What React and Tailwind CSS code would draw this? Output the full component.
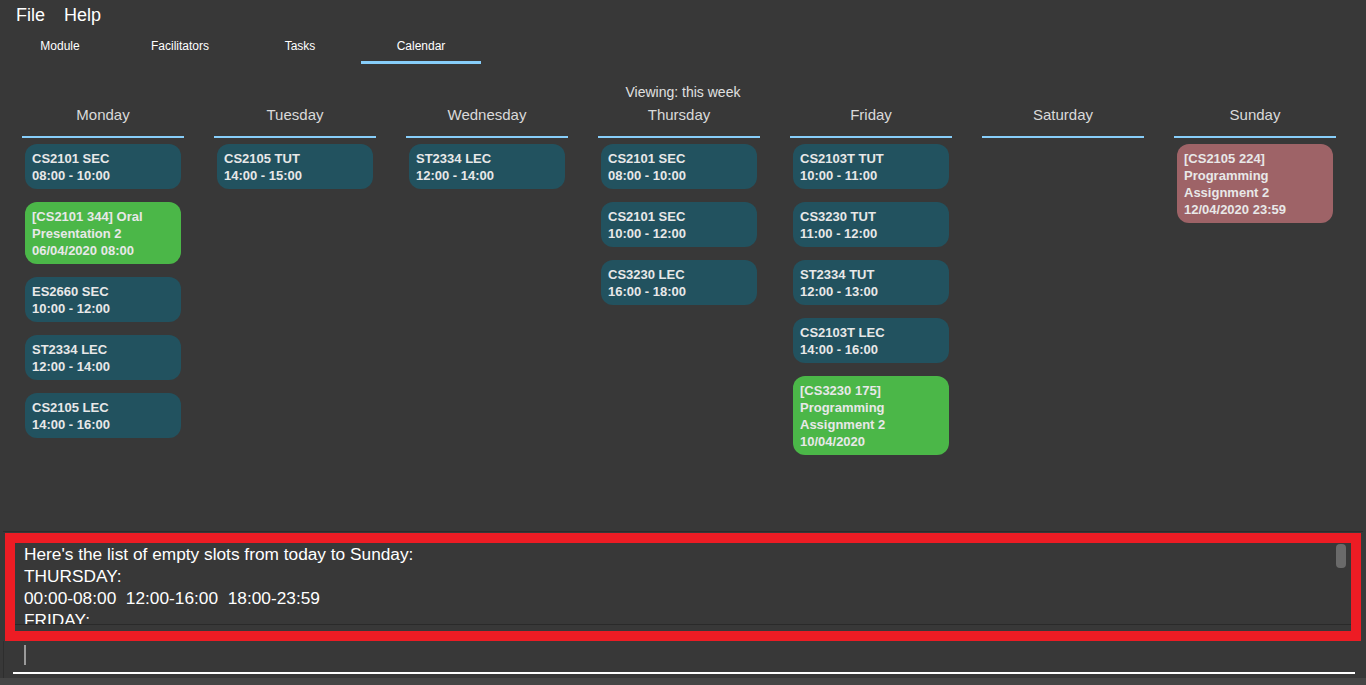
const days = [
  {
    name: "Monday",
    items: [
      { kind: "lesson", lines: ["CS2101 SEC", "08:00 - 10:00"] },
      { kind: "task", lines: ["[CS2101 344] Oral", "Presentation 2", "06/04/2020 08:00"] },
      { kind: "lesson", lines: ["ES2660 SEC", "10:00 - 12:00"] },
      { kind: "lesson", lines: ["ST2334 LEC", "12:00 - 14:00"] },
      { kind: "lesson", lines: ["CS2105 LEC", "14:00 - 16:00"] },
    ],
  },
  { name: "Tuesday", items: [{ kind: "lesson", lines: ["CS2105 TUT", "14:00 - 15:00"] }] },
  { name: "Wednesday", items: [{ kind: "lesson", lines: ["ST2334 LEC", "12:00 - 14:00"] }] },
  {
    name: "Thursday",
    items: [
      { kind: "lesson", lines: ["CS2101 SEC", "08:00 - 10:00"] },
      { kind: "lesson", lines: ["CS2101 SEC", "10:00 - 12:00"] },
      { kind: "lesson", lines: ["CS3230 LEC", "16:00 - 18:00"] },
    ],
  },
  {
    name: "Friday",
    items: [
      { kind: "lesson", lines: ["CS2103T TUT", "10:00 - 11:00"] },
      { kind: "lesson", lines: ["CS3230 TUT", "11:00 - 12:00"] },
      { kind: "lesson", lines: ["ST2334 TUT", "12:00 - 13:00"] },
      { kind: "lesson", lines: ["CS2103T LEC", "14:00 - 16:00"] },
      { kind: "task", lines: ["[CS3230 175]", "Programming", "Assignment 2", "10/04/2020"] },
    ],
  },
  { name: "Saturday", items: [] },
  {
    name: "Sunday",
    items: [{ kind: "overdue", lines: ["[CS2105 224]", "Programming", "Assignment 2", "12/04/2020 23:59"] }],
  },
];

const cardColor = {
  lesson: "bg-[#22525f]",
  task: "bg-[#4bb748]",
  overdue: "bg-[#9e6367]",
};

const Card = ({ item }) => (
  <div className={`${cardColor[item.kind]} rounded-[12px] px-[7px] py-[5.5px] text-[13px] font-bold leading-[17px] text-[#e8e8e8]`}>
    {item.lines.map((l, i) => (
      <div key={i}>{l}</div>
    ))}
  </div>
);

const DayColumn = ({ day }) => (
  <div className="w-[162px] flex flex-col">
    <div className="border-b-2 border-[#87cefa] pb-[12px] pt-[5px] text-center text-[15px] leading-[18px] text-[#dadada]">
      {day.name}
    </div>
    <div className="flex flex-col gap-[13px] px-[3px] pt-[6px]">
      {day.items.map((it, i) => (
        <Card key={i} item={it} />
      ))}
    </div>
  </div>
);

const tabs = ["Module", "Facilitators", "Tasks", "Calendar"];

export default function App() {
  return (
    <div className="w-[1366px] h-[685px] bg-[#383838] flex flex-col overflow-hidden font-['Liberation_Sans',Arial,sans-serif]">
      <div className="h-[30px] flex items-center gap-[19px] pl-[16px] text-[18px] text-white">
        <span>File</span>
        <span>Help</span>
      </div>

      <div className="h-[34px] flex">
        {tabs.map((t) => (
          <div
            key={t}
            className={`w-[120px] flex items-center justify-center text-[12px] text-white ${
              t === "Calendar" ? "border-b-[3px] border-[#87cefa] ml-[1px] pt-[1px]" : "border-b-[3px] border-transparent"
            }`}
          >
            {t}
          </div>
        ))}
      </div>

      <div className="pt-[19px] text-center text-[14px] leading-[18px] text-[#e0e0e0]">Viewing: this week</div>

      <div className="flex gap-[30px] pl-[22px]">
        {days.map((d) => (
          <DayColumn key={d.name} day={d} />
        ))}
      </div>

      <div className="flex-1" />

      <div className="border-t border-[#2c2c2c] mx-[3px]" />
      <div className="mx-[5px] mt-[1px] border-[10px] border-[#ed1c24] h-[108px] flex flex-col">
        <div className="relative h-[81px] overflow-hidden pl-[9px] text-[17.3px] leading-[22px] text-white">
          <div>Here's the list of empty slots from today to Sunday:</div>
          <div>THURSDAY:</div>
          <div className="whitespace-pre">00:00-08:00  12:00-16:00  18:00-23:59</div>
          <div>FRIDAY:</div>
          <div className="absolute right-[5px] top-[1px] w-[10px] h-[24px] rounded-[4px] bg-[#6a6a6a]" />
        </div>
        <div className="flex-1 border-t border-[#2a2a2a]" />
      </div>

      <div className="h-[37px] mx-[3px] border-l border-[#2e2e2e] pl-[9px] pr-[8px] flex flex-col">
        <div className="h-[31px] pl-[11px] pt-[4px]">
          <div className="w-[2px] h-[20px] bg-[#9a9a9a]" />
        </div>
        <div className="h-[2px] bg-white" />
      </div>
      <div className="h-[7px] bg-[#454545]" />
    </div>
  );
}
